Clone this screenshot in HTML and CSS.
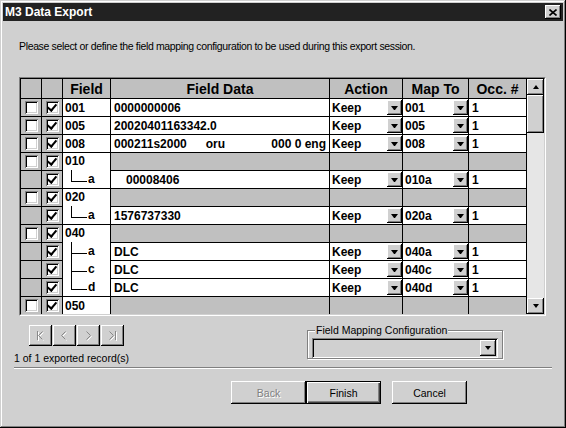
FILE: index.html
```html
<!DOCTYPE html>
<html lang="en">
<head>
  <meta charset="UTF-8" />
  <title>M3 Data Export</title>
  <link rel="stylesheet" href="styles.css">
</head>
<body>
  <div class="window">
    <div class="titlebar">
      <span class="title">M3 Data Export</span>
      <span class="close raised">
        <svg width="8" height="7" viewBox="0 0 8 7"><path d="M0.5 0.5 L7.5 6.5 M7.5 0.5 L0.5 6.5" stroke="#000" stroke-width="1.6"/></svg>
      </span>
    </div>

    <p class="intro">Please select or define the field mapping configuration to be used during this export session.</p>

    <div class="grid-frame">
      <div class="grid-inner">
        <div class="grid">
          <!-- header -->
          <div class="h"></div><div class="h"></div>
          <div class="h">Field</div><div class="h">Field Data</div><div class="h">Action</div><div class="h">Map To</div><div class="h">Occ. #</div>

          <!-- 001 -->
          <div class="g ck"><span class="cb"></span></div>
          <div class="g ck"><span class="cb on"></span></div>
          <div class="c">001</div>
          <div class="c data">0000000006</div>
          <div class="c dd">Keep<span class="drop raised"></span></div>
          <div class="c dd">001<span class="drop raised"></span></div>
          <div class="c occ">1</div>

          <!-- 005 -->
          <div class="g ck"><span class="cb"></span></div>
          <div class="g ck"><span class="cb on"></span></div>
          <div class="c">005</div>
          <div class="c data">20020401163342.0</div>
          <div class="c dd">Keep<span class="drop raised"></span></div>
          <div class="c dd">005<span class="drop raised"></span></div>
          <div class="c occ">1</div>

          <!-- 008 -->
          <div class="g ck"><span class="cb"></span></div>
          <div class="g ck"><span class="cb on"></span></div>
          <div class="c">008</div>
          <div class="c data"><span>000211s2000</span><span class="mid">oru</span><span class="end">000 0 eng</span></div>
          <div class="c dd">Keep<span class="drop raised"></span></div>
          <div class="c dd">008<span class="drop raised"></span></div>
          <div class="c occ">1</div>

          <!-- 010 -->
          <div class="g ck"><span class="cb"></span></div>
          <div class="g ck"><span class="cb on"></span></div>
          <div class="c field span2">
            <div class="tag">010</div>
            <div class="sub last"><span class="branch"></span>a</div>
          </div>
          <div class="g"></div><div class="g"></div><div class="g"></div><div class="g"></div>

          <div class="g"></div>
          <div class="g ck"><span class="cb on"></span></div>
          <div class="c data indent">00008406</div>
          <div class="c dd">Keep<span class="drop raised"></span></div>
          <div class="c dd">010a<span class="drop raised"></span></div>
          <div class="c occ">1</div>

          <!-- 020 -->
          <div class="g ck"><span class="cb"></span></div>
          <div class="g ck"><span class="cb on"></span></div>
          <div class="c field span2">
            <div class="tag">020</div>
            <div class="sub last"><span class="branch"></span>a</div>
          </div>
          <div class="g"></div><div class="g"></div><div class="g"></div><div class="g"></div>

          <div class="g"></div>
          <div class="g ck"><span class="cb on"></span></div>
          <div class="c data">1576737330</div>
          <div class="c dd">Keep<span class="drop raised"></span></div>
          <div class="c dd">020a<span class="drop raised"></span></div>
          <div class="c occ">1</div>

          <!-- 040 -->
          <div class="g ck"><span class="cb"></span></div>
          <div class="g ck"><span class="cb on"></span></div>
          <div class="c field span4">
            <div class="tag">040</div>
            <div class="sub"><span class="branch"></span>a</div>
            <div class="sub"><span class="branch"></span>c</div>
            <div class="sub last"><span class="branch"></span>d</div>
          </div>
          <div class="g"></div><div class="g"></div><div class="g"></div><div class="g"></div>

          <div class="g"></div>
          <div class="g ck"><span class="cb on"></span></div>
          <div class="c data">DLC</div>
          <div class="c dd">Keep<span class="drop raised"></span></div>
          <div class="c dd">040a<span class="drop raised"></span></div>
          <div class="c occ">1</div>

          <div class="g"></div>
          <div class="g ck"><span class="cb on"></span></div>
          <div class="c data">DLC</div>
          <div class="c dd">Keep<span class="drop raised"></span></div>
          <div class="c dd">040c<span class="drop raised"></span></div>
          <div class="c occ">1</div>

          <div class="g"></div>
          <div class="g ck"><span class="cb on"></span></div>
          <div class="c data">DLC</div>
          <div class="c dd">Keep<span class="drop raised"></span></div>
          <div class="c dd">040d<span class="drop raised"></span></div>
          <div class="c occ">1</div>

          <!-- 050 -->
          <div class="g ck"><span class="cb"></span></div>
          <div class="g ck"><span class="cb on"></span></div>
          <div class="c">050</div>
          <div class="g"></div><div class="g"></div><div class="g"></div><div class="g"></div>
        </div>

        <div class="vscroll">
          <span class="sb-btn raised"><span class="tri up"></span></span>
          <span class="thumb raised"></span>
          <span class="track"></span>
          <span class="sb-btn raised"><span class="tri"></span></span>
        </div>
      </div>
    </div>

    <div class="lower">
      <div class="nav-area">
        <div class="nav">
          <span class="nav-btn raised">
            <svg width="9" height="10" viewBox="0 0 9 10"><g fill="none" stroke="#fff"><path d="M2.5 1 V10 M7.5 1.5 L3.5 5.5 L7.5 9.5"/></g><g fill="none" stroke="#888"><path d="M1.5 0 V9 M6.5 0.5 L2.5 4.5 L6.5 8.5"/></g></svg>
          </span>
          <span class="nav-btn raised">
            <svg width="9" height="10" viewBox="0 0 9 10"><path d="M6.5 1.5 L2.5 5.5 L6.5 9.5" fill="none" stroke="#fff"/><path d="M5.5 0.5 L1.5 4.5 L5.5 8.5" fill="none" stroke="#888"/></svg>
          </span>
          <span class="nav-btn raised">
            <svg width="9" height="10" viewBox="0 0 9 10"><path d="M3.5 1.5 L7.5 5.5 L3.5 9.5" fill="none" stroke="#fff"/><path d="M2.5 0.5 L6.5 4.5 L2.5 8.5" fill="none" stroke="#888"/></svg>
          </span>
          <span class="nav-btn raised">
            <svg width="9" height="10" viewBox="0 0 9 10"><g fill="none" stroke="#fff"><path d="M8.5 1 V10 M2.5 1.5 L6.5 5.5 L2.5 9.5"/></g><g fill="none" stroke="#888"><path d="M7.5 0 V9 M1.5 0.5 L5.5 4.5 L1.5 8.5"/></g></svg>
          </span>
        </div>
        <div class="count">1 of 1 exported record(s)</div>
      </div>

      <fieldset class="config">
        <legend>Field Mapping Configuration</legend>
        <div class="combo">
          <span class="combo-btn raised"><span class="tri"></span></span>
        </div>
      </fieldset>
    </div>

    <div class="separator"></div>

    <div class="actions">
      <span class="btn raised disabled">Back</span>
      <span class="btn default">Finish</span>
      <span class="btn raised cancel">Cancel</span>
    </div>
  </div>
</body>
</html>
```

FILE: styles.css
```css
* {
  box-sizing: border-box;
}

body {
  margin: 0;
  background: #d0d0d0;
  font-family: "Liberation Sans", Arial, sans-serif;
  font-size: 10.5px;
  color: #000;
}

.window {
  width: 566px;
  height: 428px;
  padding: 3px;
  background: #d0d0d0;
  box-shadow: inset -1px -1px #000, inset 1px 1px #d0d0d0, inset -2px -2px #808080, inset 2px 2px #fff;
}

.raised {
  background: #d0d0d0;
  box-shadow: inset -1px -1px #000, inset 1px 1px #fff, inset -2px -2px #808080;
}

/* title bar */
.titlebar {
  height: 18px;
  background: #222;
  color: #fff;
  display: flex;
  align-items: center;
  justify-content: space-between;
  padding: 0 2px 0 2px;
}

.titlebar .title {
  font-weight: bold;
  font-size: 12px;
}

.close {
  width: 16px;
  height: 14px;
  display: flex;
  align-items: center;
  justify-content: center;
}

.intro {
  margin: 19px 0 0 16px;
  line-height: 13px;
  letter-spacing: -0.35px;
}

/* mapping grid */
.grid-frame {
  margin: 24px 0 0 16px;
  width: 527px;
  border: 1px solid;
  border-color: #808080 #fff #fff #808080;
}

.grid-inner {
  display: flex;
  height: 237px;
  border: 1px solid;
  border-color: #000 #d0d0d0 #d0d0d0 #000;
  overflow: hidden;
}

.grid {
  display: grid;
  grid-template-columns: 20px 20px 47px 218px 72px 65px 57px;
  grid-template-rows: 19px;
  grid-auto-rows: 17px;
  gap: 1px;
  align-content: start;
  background: #000;
  border-right: 1px solid #000;
}

.h {
  background: #c0c0c0;
  font-weight: bold;
  font-size: 14px;
  display: flex;
  align-items: center;
  justify-content: center;
}

.g {
  background: #c0c0c0;
}

.c {
  background: #fff;
  display: flex;
  align-items: center;
  padding-left: 2px;
  font-weight: bold;
  font-size: 12px;
  white-space: nowrap;
  overflow: hidden;
}

.data {
  padding-left: 3px;
}

.data .mid {
  margin-left: 19px;
}

.data .end {
  margin-left: auto;
  padding-right: 3px;
}

.indent {
  padding-left: 15px;
}

.occ {
  padding-left: 3px;
}

.dd {
  justify-content: space-between;
}

.drop {
  width: 15px;
  height: 15px;
  display: flex;
  align-items: center;
  justify-content: center;
}

.drop::after,
.tri {
  content: '';
  width: 1px;
  border-top: 4px solid #000;
  border-left: 3px solid transparent;
  border-right: 3px solid transparent;
}

.tri.up {
  border-top: 0;
  border-bottom: 4px solid #000;
}

.ck {
  display: flex;
  align-items: center;
  justify-content: center;
}

.cb {
  width: 13px;
  height: 13px;
  background: #fff;
  box-shadow: inset 1px 1px #808080, inset -1px -1px #fff, inset 2px 2px #000, inset -2px -2px #d0d0d0;
  display: flex;
  align-items: center;
  justify-content: center;
}

.cb.on::after {
  content: '';
  width: 4px;
  height: 7px;
  margin-top: -2px;
  border-right: 2px solid #000;
  border-bottom: 2px solid #000;
  transform: rotate(40deg);
}

.field {
  flex-direction: column;
  align-items: stretch;
  padding-left: 0;
}

.span2 {
  grid-row: span 2;
}

.span4 {
  grid-row: span 4;
}

.field .tag {
  height: 17px;
  line-height: 17px;
  padding-left: 2px;
}

.sub {
  height: 18px;
  display: flex;
  align-items: center;
}

.branch {
  display: flex;
  flex-direction: column;
  width: 16px;
  height: 18px;
  margin: 0 1px 0 8px;
}

.branch::before {
  content: '';
  height: 11px;
  border-left: 1px solid #000;
  border-bottom: 1px solid #000;
}

.branch::after {
  content: '';
  flex: 1;
  border-left: 1px solid #000;
}

.sub.last .branch::after {
  border-left: 0;
}

/* scrollbar */
.vscroll {
  width: 17px;
  display: flex;
  flex-direction: column;
  background: #e6e6e6;
}

.sb-btn {
  height: 16px;
  display: flex;
  align-items: center;
  justify-content: center;
}

.thumb {
  height: 38px;
}

.track {
  flex: 1;
}

/* lower part */
.lower {
  display: flex;
  height: 51px;
  padding: 9px 0 0 11px;
}

.nav-area {
  width: 293px;
}

.nav {
  display: flex;
  gap: 1px;
  margin-left: 15px;
}

.nav-btn {
  width: 23px;
  height: 21px;
  display: flex;
  align-items: center;
  justify-content: center;
}

.count {
  margin-top: 6px;
}

.config {
  width: 196px;
  height: 34px;
  margin: 0;
  padding: 0 4px;
  border: 1px solid #808080;
  box-shadow: inset 1px 1px #fff, 1px 1px #fff;
}

.config legend {
  padding: 0 1px;
  margin-left: 3px;
  background: #d0d0d0;
  line-height: 11px;
}

.combo {
  height: 20px;
  margin-top: 2px;
  display: flex;
  justify-content: flex-end;
  align-items: center;
  padding-right: 2px;
  box-shadow: inset 1px 1px #808080, inset -1px -1px #fff, inset 2px 2px #000, inset -2px -2px #d0d0d0;
}

.combo-btn {
  width: 16px;
  height: 16px;
  display: flex;
  align-items: center;
  justify-content: center;
}

.separator {
  margin: 0 11px 0 11px;
  height: 2px;
  border-top: 1px solid #808080;
  border-bottom: 1px solid #fff;
}

.actions {
  display: flex;
  margin-top: 12px;
  padding-left: 228px;
}

.btn {
  width: 75px;
  height: 23px;
  display: flex;
  align-items: center;
  justify-content: center;
}

.btn.disabled {
  color: #808080;
  text-shadow: 1px 1px #fff;
}

.btn.default {
  background: #d0d0d0;
  box-shadow: inset 0 0 0 1px #000, inset 2px 2px #fff, inset -2px -2px #404040, inset -3px -3px #808080;
}

.btn.cancel {
  margin-left: 11px;
}
```
